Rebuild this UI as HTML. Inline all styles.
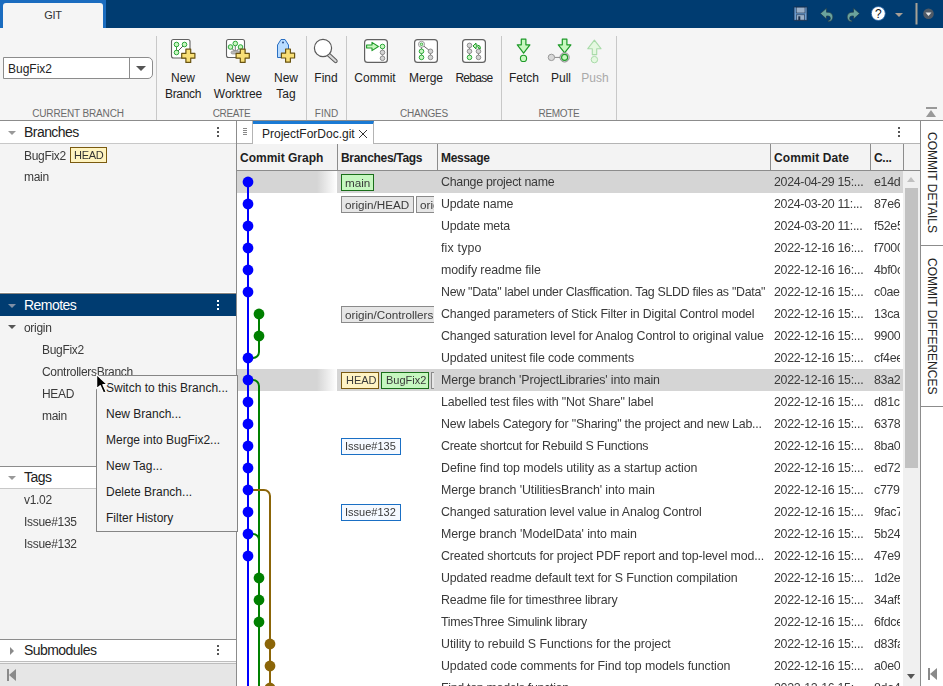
<!DOCTYPE html>
<html><head><meta charset="utf-8">
<style>
*{box-sizing:border-box}
html,body{margin:0;padding:0}
body{width:943px;height:686px;overflow:hidden;position:relative;background:#f5f5f5;font-family:"Liberation Sans",sans-serif;font-size:12px;color:#222}
.a{position:absolute}
.t{position:absolute;white-space:nowrap;line-height:1}
/* top bar */
#top{left:0;top:0;width:943px;height:28px;background:#003c71}
#tabframe{left:0;top:0;width:106px;height:28px;background:#1a6cbf}
#gittab{left:3px;top:3px;width:100px;height:25px;background:#f5f5f5;border-radius:3px 3px 0 0}
/* toolstrip */
#ts{left:0;top:28px;width:943px;height:93px;background:#f5f5f5;border-bottom:1px solid #8c8c8c}
.sep{position:absolute;top:36px;width:1px;height:84px;background:#c8c8c8}
.lbl{position:absolute;top:109px;font-size:10px;color:#6b6b6b;text-align:center;line-height:10px}
.btxt{position:absolute;font-size:12px;color:#222;text-align:center;line-height:16px}
/* left panel */
#left{left:0;top:121px;width:237px;height:565px;background:#f4f4f4;border-right:1px solid #8c8c8c}
.ph{position:absolute;left:0;width:236px;height:22px;background:#fff}
.ph .t{font-size:13px;left:24px;top:6px;color:#222}
.tri{position:absolute;width:0;height:0;border-left:4px solid transparent;border-right:4px solid transparent;border-top:4px solid #999}
.dots{position:absolute;width:2px;}
.dots i{display:block;width:2px;height:2px;background:#555;margin-bottom:2px}
.li{position:absolute;font-size:12px;letter-spacing:-0.3px;color:#3a3a3a;line-height:1;white-space:nowrap;will-change:transform}
.gs{will-change:transform}
.bd{display:inline-block;overflow:hidden;height:17px;border:1px solid #8a8a8a;background:#e6e6e6;padding:0 3px 0 3px;margin-right:2px;font-size:11.7px;line-height:15px;color:#3a3a3a;vertical-align:top}
.bd.g{background:#c6f7c0;border-color:#1a6e1a}
.bd.h{background:#fff3c4;border-color:#7a5a10}
.bd.tg{background:#f5f9ff;border-color:#1a6fc4}
</style></head>
<body>
<div id="top" class="a"></div>
<div id="tabframe" class="a"></div>
<div id="gittab" class="a"></div>
<div class="t" style="left:3px;width:100px;text-align:center;top:10px;font-size:11px;color:#333;letter-spacing:-0.3px">GIT</div>

<div id="ts" class="a"></div>
<div class="sep" style="left:156px"></div>
<div class="sep" style="left:306px"></div>
<div class="sep" style="left:346px"></div>
<div class="sep" style="left:501px"></div>
<div class="sep" style="left:616px"></div>


<!-- toolstrip content -->
<div class="a" style="left:3px;top:57px;width:150px;height:22px;background:#fff;border:1px solid #8c8c8c;border-radius:0 5px 5px 0"></div>
<div class="a" style="left:129px;top:58px;width:1px;height:20px;background:#8c8c8c"></div>
<div class="a" style="left:136px;top:66px;width:0;height:0;border-left:5px solid transparent;border-right:5px solid transparent;border-top:5px solid #555"></div>
<div class="t" style="left:8px;top:63px;font-size:12px;color:#222">BugFix2</div>

<div class="lbl" style="left:0;width:156px;letter-spacing:-0.15px">CURRENT BRANCH</div>
<div class="lbl" style="left:157px;width:149px;letter-spacing:-0.4px">CREATE</div>
<div class="lbl" style="left:307px;width:39px">FIND</div>
<div class="lbl" style="left:347px;width:154px;letter-spacing:-0.2px">CHANGES</div>
<div class="lbl" style="left:502px;width:114px;letter-spacing:-0.3px">REMOTE</div>

<div class="btxt" style="left:153px;top:70px;width:60px">New<br><span style="letter-spacing:-0.35px">Branch</span></div>
<div class="btxt" style="left:208px;top:70px;width:60px">New<br>Worktree</div>
<div class="btxt" style="left:256px;top:70px;width:60px">New<br>Tag</div>
<div class="btxt" style="left:296px;top:70px;width:60px">Find</div>
<div class="btxt" style="left:345px;top:70px;width:60px">Commit</div>
<div class="btxt" style="left:396px;top:70px;width:60px">Merge</div>
<div class="btxt" style="left:444px;top:70px;width:60px;letter-spacing:-0.7px">Rebase</div>
<div class="btxt" style="left:494px;top:70px;width:60px">Fetch</div>
<div class="btxt" style="left:531px;top:70px;width:60px">Pull</div>
<div class="btxt" style="left:565px;top:70px;width:60px;color:#a9a9a9">Push</div>

<svg class="a" style="left:0;top:0" width="943" height="121" viewBox="0 0 943 121">
 <defs>
  <path id="plus" d="M-2.4,-6.6 H2.4 V-2.4 H6.6 V2.4 H2.4 V6.6 H-2.4 V2.4 H-6.6 V-2.4 H-2.4 Z" fill="#f8df76" stroke="#6a5412" stroke-width="1.2" stroke-linejoin="round"/>
  <g id="gdot"><circle r="2.3" fill="#c8f7c0" stroke="#2ba83a" stroke-width="1"/></g>
  <g id="ydot"><circle r="2.3" fill="#d4d4d4" stroke="#8f8f8f" stroke-width="1"/></g>
 </defs>
 <!-- New Branch -->
 <rect x="171.5" y="39.5" width="18.5" height="18.5" rx="2" fill="#fff" stroke="#616161" stroke-width="1.1"/>
 <line x1="176.5" y1="44.5" x2="176.5" y2="52.5" stroke="#3a9a3a" stroke-width="1"/>
 <line x1="176.5" y1="52.5" x2="184.5" y2="44.5" stroke="#555" stroke-width="1"/>
 <use href="#gdot" x="176.5" y="44.5"/><use href="#gdot" x="184.5" y="44.5"/><use href="#gdot" x="176.5" y="52.5"/>
 <use href="#plus" x="188.3" y="55.8"/>
 <!-- New Worktree -->
 <rect x="226.5" y="39.5" width="18" height="18" rx="2" fill="#fff" stroke="#616161" stroke-width="1.1"/>
 <line x1="235.3" y1="44" x2="235.3" y2="52" stroke="#555" stroke-width="0.8"/>
 <line x1="230.5" y1="47" x2="235.5" y2="52" stroke="#555"/><line x1="240.5" y1="47" x2="235.5" y2="52" stroke="#555"/>
 <rect x="231" y="51" width="9" height="3" rx="1.5" fill="#bbb" stroke="#888" stroke-width="0.6"/>
 <use href="#gdot" x="235.3" y="43.5"/><use href="#gdot" x="230.5" y="47"/><use href="#gdot" x="240.5" y="47"/>
 <use href="#plus" x="242.7" y="55.8"/>
 <!-- New Tag -->
 <path d="M277.5,57.5 V45 L281,39.5 h4 L288.5,45 V57.5 z" fill="#b9dcff" stroke="#2a6fc2"/>
 <circle cx="283" cy="42.5" r="1" fill="#2a4f8a"/>
 <use href="#plus" x="288" y="55.6"/>
 <!-- Find -->
 <line x1="328.6" y1="54.6" x2="335.6" y2="61" stroke="#5a5a5a" stroke-width="4.2" stroke-linecap="round"/>
 <line x1="328.6" y1="54.6" x2="335.6" y2="61" stroke="#d8d8d8" stroke-width="2.2" stroke-linecap="round"/>
 <circle cx="323" cy="48" r="8.6" fill="#fff" stroke="#5a5a5a" stroke-width="1.2"/>
 <!-- Commit -->
 <rect x="364.6" y="39.6" width="22.8" height="22.8" rx="3" fill="#fff" stroke="#616161" stroke-width="1.2"/>
 <path d="M366.6,45 h5.4 v-2.6 l6.4,4.1 -6.4,4.1 v-2.6 h-5.4z" fill="#c8f8c0" stroke="#1e9a28" stroke-width="1.1" stroke-linejoin="round"/>
 <line x1="382.5" y1="46.5" x2="382.5" y2="58.3" stroke="#8a8a8a" stroke-width="0.8"/>
 <use href="#gdot" x="382.5" y="46.5"/><use href="#ydot" x="382.5" y="52.4"/><use href="#ydot" x="382.5" y="58.3"/>
 <!-- Merge -->
 <rect x="414.6" y="39.6" width="22.8" height="22.8" rx="3" fill="#fff" stroke="#616161" stroke-width="1.2"/>
 <line x1="421.5" y1="44.3" x2="421.5" y2="57.4" stroke="#555" stroke-width="0.8"/>
 <line x1="421.5" y1="44.3" x2="430.5" y2="51.3" stroke="#555" stroke-width="0.9"/>
 <line x1="430.5" y1="51.3" x2="430.5" y2="57.4" stroke="#555" stroke-width="0.8"/>
 <circle cx="421.5" cy="44.3" r="3" fill="#fff" stroke="#8a8a8a" stroke-width="0.9"/><circle cx="421.5" cy="44.3" r="1.3" fill="#c8f8c0" stroke="#1e9a28" stroke-width="0.8"/>
 <use href="#gdot" x="421.5" y="51.3"/><use href="#gdot" x="421.5" y="57.4"/>
 <use href="#ydot" x="430.5" y="51.3"/><use href="#ydot" x="430.5" y="57.4"/>
 <!-- Rebase -->
 <rect x="462.6" y="39.6" width="22.8" height="22.8" rx="3" fill="#fff" stroke="#616161" stroke-width="1.2"/>
 <line x1="469.5" y1="45.4" x2="469.5" y2="57.4" stroke="#555" stroke-width="0.8"/>
 <use href="#ydot" x="469.5" y="45.4"/><use href="#ydot" x="469.5" y="51.3"/><use href="#gdot" x="469.5" y="57.4"/>
 <line x1="478.5" y1="51.3" x2="478.5" y2="57.4" stroke="#555" stroke-width="0.8"/>
 <use href="#ydot" x="478.5" y="51.3"/><use href="#ydot" x="478.5" y="57.4"/>
 <path d="M480.4,48.6 v-0.6 a2.8,2.8 0 0 0 -2.8,-2.8 h-1.6 v-2.1 l-3,2.9 3,2.9 v-2.1 h1.6 a1.1,1.1 0 0 1 1.1,1.1 v0.7z" fill="#c8f8c0" stroke="#1e9a28" stroke-width="1" stroke-linejoin="round"/>
 <!-- Fetch -->
 <path d="M521.3,39.2 h4.6 v5.6 h4 l-6.3,8.4 -6.3,-8.4 h4z" fill="#c8f8c0" stroke="#1e9a28" stroke-width="1.2" stroke-linejoin="round"/>
 <circle cx="523.5" cy="58.4" r="3.1" fill="#c8f8c0" stroke="#1e9a28" stroke-width="1.1"/>
 <!-- Pull -->
 <path d="M562.3,39.2 h4.6 v5.6 h4 l-6.3,8.1 -6.3,-8.1 h4z" fill="#c8f8c0" stroke="#1e9a28" stroke-width="1.2" stroke-linejoin="round"/>
 <line x1="551.4" y1="57.4" x2="560" y2="57.4" stroke="#8a8a8a" stroke-width="1"/>
 <circle cx="551.4" cy="57.4" r="3.2" fill="#d8d8d8" stroke="#9a9a9a" stroke-width="1"/>
 <circle cx="564.6" cy="57.4" r="4.6" fill="#e6e6e6" stroke="#8a8a8a" stroke-width="1"/>
 <circle cx="564.6" cy="57.4" r="3" fill="#c8f8c0" stroke="#1e9a28" stroke-width="1.1"/>
 <!-- Push -->
 <path d="M592.3,54.6 h4.4 v-5.9 h4.3 l-6.6,-8.6 -6.6,8.6 h4.5z" fill="#e4f8e0" stroke="#a9dba9" stroke-width="1.1" stroke-linejoin="round"/>
 <circle cx="594.4" cy="59.6" r="3.2" fill="#e4f8e0" stroke="#a9dba9" stroke-width="1"/>
 <!-- top right icons -->
</svg>

<div id="left" class="a"></div>

<!-- left panel content -->
<div class="ph" style="top:121px"></div>
<div class="a" style="left:0;top:143px;width:236px;height:1px;background:#c8c8c8"></div>
<div class="tri" style="left:8px;top:131px"></div>
<div class="t" style="left:24px;top:125px;font-size:14px;letter-spacing:-0.55px;color:#222">Branches</div>
<div class="dots" style="left:217px;top:127px"><i></i><i></i><i></i></div>
<div class="li" style="left:24px;top:150px">BugFix2</div>
<div class="a" style="left:70px;top:147px;width:37px;height:16px;background:#fff4c0;border:1px solid #7a5a10"></div>
<div class="li" style="left:74px;top:150px;color:#333;font-size:11px">HEAD</div>
<div class="li" style="left:24px;top:171px">main</div>

<div class="a" style="left:0;top:292px;width:236px;height:1px;background:#fff"></div>
<div class="a" style="left:0;top:293px;width:236px;height:1px;background:#8a8580"></div>
<div class="a" style="left:0;top:294px;width:236px;height:22px;background:#003c71"></div>
<div class="tri" style="left:8px;top:304px;border-top-color:#7f8fa5"></div>
<div class="t" style="left:24px;top:298px;font-size:14px;letter-spacing:-0.55px;color:#fff">Remotes</div>
<div class="dots" style="left:217px;top:300px"><i style="background:#fff"></i><i style="background:#fff"></i><i style="background:#fff"></i></div>
<div class="tri" style="left:8px;top:325px;border-top-color:#555"></div>
<div class="li" style="left:24px;top:322px">origin</div>
<div class="li" style="left:42px;top:344px">BugFix2</div>
<div class="li" style="left:42px;top:366px">ControllersBranch</div>
<div class="li" style="left:42px;top:388px">HEAD</div>
<div class="li" style="left:42px;top:410px">main</div>

<div class="a" style="left:0;top:466px;width:236px;height:1px;background:#8c8c8c"></div>
<div class="ph" style="top:467px"></div>
<div class="a" style="left:0;top:488px;width:236px;height:1px;background:#c8c8c8"></div>
<div class="tri" style="left:8px;top:476px"></div>
<div class="t" style="left:24px;top:470px;font-size:14px;letter-spacing:-0.55px;color:#222">Tags</div>
<div class="li" style="left:24px;top:494px">v1.02</div>
<div class="li" style="left:24px;top:516px">Issue#135</div>
<div class="li" style="left:24px;top:538px">Issue#132</div>

<div class="a" style="left:0;top:639px;width:236px;height:1px;background:#8c8c8c"></div>
<div class="ph" style="top:640px;height:21px"></div>
<div class="a" style="left:0;top:661px;width:236px;height:1px;background:#bdbdbd"></div>
<div class="a" style="left:0;top:662px;width:236px;height:1px;background:#f5f5f5"></div>
<div class="a" style="left:0;top:663px;width:236px;height:1px;background:#bdbdbd"></div>
<div class="a" style="left:10px;top:647px;width:0;height:0;border-top:4px solid transparent;border-bottom:4px solid transparent;border-left:4px solid #8a8a8a"></div>
<div class="t" style="left:24px;top:643px;font-size:14px;letter-spacing:-0.55px;color:#222">Submodules</div>
<div class="dots" style="left:217px;top:645px"><i></i><i></i><i></i></div>
<div class="a" style="left:0;top:664px;width:236px;height:22px;background:#e6e6e6"></div>
<div class="a" style="left:7px;top:669px;width:2px;height:12px;background:#8a8a8a"></div>
<div class="a" style="left:9px;top:669px;width:0;height:0;border-top:6px solid transparent;border-bottom:6px solid transparent;border-right:7.5px solid #8a8a8a"></div>

<!-- main table -->
<div class="a" style="left:237px;top:121px;width:683px;height:22px;background:#fff"></div>
<div class="a" style="left:237px;top:121px;width:16px;height:23px;background:#fff;border-right:1px solid #b4b4b4;border-bottom:1px solid #b4b4b4"></div>
<div class="a" style="left:243px;top:128px;width:4px;height:1px;background:#888;box-shadow:0 2px 0 #888,0 4px 0 #888,0 6px 0 #888"></div>
<div class="a" style="left:373px;top:143px;width:547px;height:1px;background:#b4b4b4"></div>
<div class="a" style="left:253px;top:121px;width:121px;height:23px;background:#fff;border-right:1px solid #b4b4b4;border-top:3px solid #1a7ad4"></div>
<div class="t" style="left:262px;top:128px;font-size:12px;color:#222">ProjectForDoc.git</div>
<svg class="a" style="left:358px;top:129px" width="10" height="10"><path d="M1,1 L9,9 M9,1 L1,9" stroke="#333" stroke-width="1"/></svg>
<div class="dots" style="left:898px;top:127px"><i></i><i></i><i></i></div>
<div class="a" style="left:237px;top:144px;width:683px;height:27px;background:#f3f3f3;border-bottom:1px solid #8c8c8c"></div>
<div class="a" style="left:337px;top:144px;width:1px;height:26px;background:#8c8c8c"></div>
<div class="a" style="left:437px;top:144px;width:1px;height:26px;background:#8c8c8c"></div>
<div class="a" style="left:770px;top:144px;width:1px;height:26px;background:#8c8c8c"></div>
<div class="a" style="left:870px;top:144px;width:1px;height:26px;background:#8c8c8c"></div>
<div class="a" style="left:903px;top:144px;width:1px;height:26px;background:#8c8c8c"></div>
<div class="t" style="left:240px;top:152px;font-weight:bold;font-size:12px;color:#1e1e1e;letter-spacing:0px">Commit Graph</div>
<div class="t" style="left:341px;top:152px;font-weight:bold;font-size:12px;color:#1e1e1e;letter-spacing:-0.3px">Branches/Tags</div>
<div class="t" style="left:441px;top:152px;font-weight:bold;font-size:12px;color:#1e1e1e;letter-spacing:-0.3px">Message</div>
<div class="t" style="left:774px;top:152px;font-weight:bold;font-size:12px;color:#1e1e1e;letter-spacing:0.1px">Commit Date</div>
<div class="t" style="left:874px;top:152px;font-weight:bold;font-size:12px;color:#1e1e1e;letter-spacing:-0.3px">C...</div>
<div class="a gs" style="left:237px;top:171px;width:668px;height:515px;background:#fff;overflow:hidden">
<div class="a" style="left:0;top:0px;width:666px;height:22px;background:#d5d5d5"></div>
<div class="a" style="left:80px;top:0px;width:20px;height:22px;background:linear-gradient(to right,#d5d5d5,#fff)"></div>
<div class="t" style="left:204px;top:5px;width:328px;overflow:hidden;padding-bottom:4px;font-size:12.4px;letter-spacing:-0.267px;color:#3a3a3a">Change project name</div>
<div class="t" style="left:537px;top:5px;font-size:12.4px;letter-spacing:-0.3px;color:#3a3a3a">2024-04-29 15:...</div>
<div class="t" style="left:637px;top:5px;width:26px;overflow:hidden;padding-bottom:4px;font-size:12.4px;letter-spacing:-0.3px;color:#3a3a3a">e14d0</div>
<div class="a" style="left:104px;top:3px;width:93px;height:18px;overflow:hidden;white-space:nowrap"><span class="bd g" style="width:33px">main</span>
</div>
<div class="t" style="left:204px;top:27px;width:328px;overflow:hidden;padding-bottom:4px;font-size:12.4px;letter-spacing:-0.200px;color:#3a3a3a">Update name</div>
<div class="t" style="left:537px;top:27px;font-size:12.4px;letter-spacing:-0.3px;color:#3a3a3a">2024-03-20 11:...</div>
<div class="t" style="left:637px;top:27px;width:26px;overflow:hidden;padding-bottom:4px;font-size:12.4px;letter-spacing:-0.3px;color:#3a3a3a">87e6a</div>
<div class="a" style="left:104px;top:25px;width:93px;height:18px;overflow:hidden;white-space:nowrap"><span class="bd x" style="width:73px">origin/HEAD</span><span class="bd x">origin/main</span>
</div>
<div class="t" style="left:204px;top:49px;width:328px;overflow:hidden;padding-bottom:4px;font-size:12.4px;letter-spacing:-0.180px;color:#3a3a3a">Update meta</div>
<div class="t" style="left:537px;top:49px;font-size:12.4px;letter-spacing:-0.3px;color:#3a3a3a">2024-03-20 11:...</div>
<div class="t" style="left:637px;top:49px;width:26px;overflow:hidden;padding-bottom:4px;font-size:12.4px;letter-spacing:-0.3px;color:#3a3a3a">f52e5</div>
<div class="t" style="left:204px;top:71px;width:328px;overflow:hidden;padding-bottom:4px;font-size:12.4px;letter-spacing:0.171px;color:#3a3a3a">fix typo</div>
<div class="t" style="left:537px;top:71px;font-size:12.4px;letter-spacing:-0.3px;color:#3a3a3a">2022-12-16 16:...</div>
<div class="t" style="left:637px;top:71px;width:26px;overflow:hidden;padding-bottom:4px;font-size:12.4px;letter-spacing:-0.3px;color:#3a3a3a">f7000</div>
<div class="t" style="left:204px;top:93px;width:328px;overflow:hidden;padding-bottom:4px;font-size:12.4px;letter-spacing:-0.082px;color:#3a3a3a">modify readme file</div>
<div class="t" style="left:537px;top:93px;font-size:12.4px;letter-spacing:-0.3px;color:#3a3a3a">2022-12-16 16:...</div>
<div class="t" style="left:637px;top:93px;width:26px;overflow:hidden;padding-bottom:4px;font-size:12.4px;letter-spacing:-0.3px;color:#3a3a3a">4bf0c</div>
<div class="t" style="left:204px;top:115px;width:328px;overflow:hidden;padding-bottom:4px;font-size:12.4px;letter-spacing:-0.292px;color:#3a3a3a">New "Data" label under Clasffication. Tag SLDD files as "Data"</div>
<div class="t" style="left:537px;top:115px;font-size:12.4px;letter-spacing:-0.3px;color:#3a3a3a">2022-12-16 15:...</div>
<div class="t" style="left:637px;top:115px;width:26px;overflow:hidden;padding-bottom:4px;font-size:12.4px;letter-spacing:-0.3px;color:#3a3a3a">c0ae9</div>
<div class="t" style="left:204px;top:137px;width:328px;overflow:hidden;padding-bottom:4px;font-size:12.4px;letter-spacing:-0.162px;color:#3a3a3a">Changed parameters of Stick Filter in Digital Control model</div>
<div class="t" style="left:537px;top:137px;font-size:12.4px;letter-spacing:-0.3px;color:#3a3a3a">2022-12-16 15:...</div>
<div class="t" style="left:637px;top:137px;width:26px;overflow:hidden;padding-bottom:4px;font-size:12.4px;letter-spacing:-0.3px;color:#3a3a3a">13ca0</div>
<div class="a" style="left:104px;top:135px;width:93px;height:18px;overflow:hidden;white-space:nowrap"><span class="bd x">origin/ControllersBranch</span>
</div>
<div class="t" style="left:204px;top:159px;width:328px;overflow:hidden;padding-bottom:4px;font-size:12.4px;letter-spacing:-0.117px;color:#3a3a3a">Changed saturation level for Analog Control to original value</div>
<div class="t" style="left:537px;top:159px;font-size:12.4px;letter-spacing:-0.3px;color:#3a3a3a">2022-12-16 15:...</div>
<div class="t" style="left:637px;top:159px;width:26px;overflow:hidden;padding-bottom:4px;font-size:12.4px;letter-spacing:-0.3px;color:#3a3a3a">99004</div>
<div class="t" style="left:204px;top:181px;width:328px;overflow:hidden;padding-bottom:4px;font-size:12.4px;letter-spacing:-0.118px;color:#3a3a3a">Updated unitest file code comments</div>
<div class="t" style="left:537px;top:181px;font-size:12.4px;letter-spacing:-0.3px;color:#3a3a3a">2022-12-16 15:...</div>
<div class="t" style="left:637px;top:181px;width:26px;overflow:hidden;padding-bottom:4px;font-size:12.4px;letter-spacing:-0.3px;color:#3a3a3a">cf4ee</div>
<div class="a" style="left:0;top:198px;width:666px;height:22px;background:#d5d5d5"></div>
<div class="a" style="left:80px;top:198px;width:20px;height:22px;background:linear-gradient(to right,#d5d5d5,#fff)"></div>
<div class="t" style="left:204px;top:203px;width:328px;overflow:hidden;padding-bottom:4px;font-size:12.4px;letter-spacing:-0.137px;color:#3a3a3a">Merge branch 'ProjectLibraries' into main</div>
<div class="t" style="left:537px;top:203px;font-size:12.4px;letter-spacing:-0.3px;color:#3a3a3a">2022-12-16 15:...</div>
<div class="t" style="left:637px;top:203px;width:26px;overflow:hidden;padding-bottom:4px;font-size:12.4px;letter-spacing:-0.3px;color:#3a3a3a">83a2e</div>
<div class="a" style="left:104px;top:201px;width:93px;height:18px;overflow:hidden;white-space:nowrap"><span class="bd h" style="width:38px;font-size:11px;padding-left:4px">HEAD</span><span class="bd g" style="width:48px;font-size:11px;padding-left:4px">BugFix2</span><span class="bd x">origin/BugFix2</span>
</div>
<div class="t" style="left:204px;top:225px;width:328px;overflow:hidden;padding-bottom:4px;font-size:12.4px;letter-spacing:-0.154px;color:#3a3a3a">Labelled test files with "Not Share" label</div>
<div class="t" style="left:537px;top:225px;font-size:12.4px;letter-spacing:-0.3px;color:#3a3a3a">2022-12-16 15:...</div>
<div class="t" style="left:637px;top:225px;width:26px;overflow:hidden;padding-bottom:4px;font-size:12.4px;letter-spacing:-0.3px;color:#3a3a3a">d81c3</div>
<div class="t" style="left:204px;top:247px;width:328px;overflow:hidden;padding-bottom:4px;font-size:12.4px;letter-spacing:-0.207px;color:#3a3a3a">New labels Category for "Sharing" the project and new Lab...</div>
<div class="t" style="left:537px;top:247px;font-size:12.4px;letter-spacing:-0.3px;color:#3a3a3a">2022-12-16 15:...</div>
<div class="t" style="left:637px;top:247px;width:26px;overflow:hidden;padding-bottom:4px;font-size:12.4px;letter-spacing:-0.3px;color:#3a3a3a">63781</div>
<div class="t" style="left:204px;top:269px;width:328px;overflow:hidden;padding-bottom:4px;font-size:12.4px;letter-spacing:-0.247px;color:#3a3a3a">Create shortcut for Rebuild S Functions</div>
<div class="t" style="left:537px;top:269px;font-size:12.4px;letter-spacing:-0.3px;color:#3a3a3a">2022-12-16 15:...</div>
<div class="t" style="left:637px;top:269px;width:26px;overflow:hidden;padding-bottom:4px;font-size:12.4px;letter-spacing:-0.3px;color:#3a3a3a">8ba01</div>
<div class="a" style="left:104px;top:267px;width:93px;height:18px;overflow:hidden;white-space:nowrap"><span class="bd tg" style="width:60px;font-size:11px;padding-left:3px">Issue#135</span>
</div>
<div class="t" style="left:204px;top:291px;width:328px;overflow:hidden;padding-bottom:4px;font-size:12.4px;letter-spacing:-0.065px;color:#3a3a3a">Define find top models utility as a startup action</div>
<div class="t" style="left:537px;top:291px;font-size:12.4px;letter-spacing:-0.3px;color:#3a3a3a">2022-12-16 15:...</div>
<div class="t" style="left:637px;top:291px;width:26px;overflow:hidden;padding-bottom:4px;font-size:12.4px;letter-spacing:-0.3px;color:#3a3a3a">ed722</div>
<div class="t" style="left:204px;top:313px;width:328px;overflow:hidden;padding-bottom:4px;font-size:12.4px;letter-spacing:-0.095px;color:#3a3a3a">Merge branch 'UtilitiesBranch' into main</div>
<div class="t" style="left:537px;top:313px;font-size:12.4px;letter-spacing:-0.3px;color:#3a3a3a">2022-12-16 15:...</div>
<div class="t" style="left:637px;top:313px;width:26px;overflow:hidden;padding-bottom:4px;font-size:12.4px;letter-spacing:-0.3px;color:#3a3a3a">c779b</div>
<div class="t" style="left:204px;top:335px;width:328px;overflow:hidden;padding-bottom:4px;font-size:12.4px;letter-spacing:-0.151px;color:#3a3a3a">Changed saturation level value in Analog Control</div>
<div class="t" style="left:537px;top:335px;font-size:12.4px;letter-spacing:-0.3px;color:#3a3a3a">2022-12-16 15:...</div>
<div class="t" style="left:637px;top:335px;width:26px;overflow:hidden;padding-bottom:4px;font-size:12.4px;letter-spacing:-0.3px;color:#3a3a3a">9fac7</div>
<div class="a" style="left:104px;top:333px;width:93px;height:18px;overflow:hidden;white-space:nowrap"><span class="bd tg" style="width:60px;font-size:11px;padding-left:3px">Issue#132</span>
</div>
<div class="t" style="left:204px;top:357px;width:328px;overflow:hidden;padding-bottom:4px;font-size:12.4px;letter-spacing:-0.073px;color:#3a3a3a">Merge branch 'ModelData' into main</div>
<div class="t" style="left:537px;top:357px;font-size:12.4px;letter-spacing:-0.3px;color:#3a3a3a">2022-12-16 15:...</div>
<div class="t" style="left:637px;top:357px;width:26px;overflow:hidden;padding-bottom:4px;font-size:12.4px;letter-spacing:-0.3px;color:#3a3a3a">5b241</div>
<div class="t" style="left:204px;top:379px;width:328px;overflow:hidden;padding-bottom:4px;font-size:12.4px;letter-spacing:-0.158px;color:#3a3a3a">Created shortcuts for project PDF report and top-level mod...</div>
<div class="t" style="left:537px;top:379px;font-size:12.4px;letter-spacing:-0.3px;color:#3a3a3a">2022-12-16 15:...</div>
<div class="t" style="left:637px;top:379px;width:26px;overflow:hidden;padding-bottom:4px;font-size:12.4px;letter-spacing:-0.3px;color:#3a3a3a">47e91</div>
<div class="t" style="left:204px;top:401px;width:328px;overflow:hidden;padding-bottom:4px;font-size:12.4px;letter-spacing:-0.121px;color:#3a3a3a">Updated readme default text for S Function compilation</div>
<div class="t" style="left:537px;top:401px;font-size:12.4px;letter-spacing:-0.3px;color:#3a3a3a">2022-12-16 15:...</div>
<div class="t" style="left:637px;top:401px;width:26px;overflow:hidden;padding-bottom:4px;font-size:12.4px;letter-spacing:-0.3px;color:#3a3a3a">1d2e0</div>
<div class="t" style="left:204px;top:423px;width:328px;overflow:hidden;padding-bottom:4px;font-size:12.4px;letter-spacing:-0.179px;color:#3a3a3a">Readme file for timesthree library</div>
<div class="t" style="left:537px;top:423px;font-size:12.4px;letter-spacing:-0.3px;color:#3a3a3a">2022-12-16 15:...</div>
<div class="t" style="left:637px;top:423px;width:26px;overflow:hidden;padding-bottom:4px;font-size:12.4px;letter-spacing:-0.3px;color:#3a3a3a">34af5</div>
<div class="t" style="left:204px;top:445px;width:328px;overflow:hidden;padding-bottom:4px;font-size:12.4px;letter-spacing:-0.262px;color:#3a3a3a">TimesThree Simulink library</div>
<div class="t" style="left:537px;top:445px;font-size:12.4px;letter-spacing:-0.3px;color:#3a3a3a">2022-12-16 15:...</div>
<div class="t" style="left:637px;top:445px;width:26px;overflow:hidden;padding-bottom:4px;font-size:12.4px;letter-spacing:-0.3px;color:#3a3a3a">6fdce</div>
<div class="t" style="left:204px;top:467px;width:328px;overflow:hidden;padding-bottom:4px;font-size:12.4px;letter-spacing:-0.067px;color:#3a3a3a">Utility to rebuild S Functions for the project</div>
<div class="t" style="left:537px;top:467px;font-size:12.4px;letter-spacing:-0.3px;color:#3a3a3a">2022-12-16 15:...</div>
<div class="t" style="left:637px;top:467px;width:26px;overflow:hidden;padding-bottom:4px;font-size:12.4px;letter-spacing:-0.3px;color:#3a3a3a">d83fa</div>
<div class="t" style="left:204px;top:489px;width:328px;overflow:hidden;padding-bottom:4px;font-size:12.4px;letter-spacing:-0.096px;color:#3a3a3a">Updated code comments for Find top models function</div>
<div class="t" style="left:537px;top:489px;font-size:12.4px;letter-spacing:-0.3px;color:#3a3a3a">2022-12-16 15:...</div>
<div class="t" style="left:637px;top:489px;width:26px;overflow:hidden;padding-bottom:4px;font-size:12.4px;letter-spacing:-0.3px;color:#3a3a3a">a0e09</div>
<div class="t" style="left:204px;top:511px;width:328px;overflow:hidden;padding-bottom:4px;font-size:12.4px;letter-spacing:-0.3px;color:#3a3a3a">Find top models function</div>
<div class="t" style="left:537px;top:511px;font-size:12.4px;letter-spacing:-0.3px;color:#3a3a3a">2022-12-16 15:...</div>
<div class="t" style="left:637px;top:511px;width:26px;overflow:hidden;padding-bottom:4px;font-size:12.4px;letter-spacing:-0.3px;color:#3a3a3a">8da4f</div>
<svg class="a" style="left:0;top:0" width="100" height="515" id="graph"><line x1="11" y1="11" x2="11" y2="515" stroke="#0000ff" stroke-width="2"/><path d="M22,143 V181 A6,6 0 0 1 16,187 H11" fill="none" stroke="#008000" stroke-width="2"/><path d="M11,209 H16 A6,6 0 0 1 22,215 V515" fill="none" stroke="#008000" stroke-width="2"/><path d="M11,363 H16 A6,6 0 0 1 22,369" fill="none" stroke="#008000" stroke-width="2"/><path d="M11,319 H27 A6,6 0 0 1 33,325 V515" fill="none" stroke="#8b6508" stroke-width="2"/><circle cx="11" cy="11" r="5.4" fill="#0000ff"/><circle cx="11" cy="33" r="5.4" fill="#0000ff"/><circle cx="11" cy="55" r="5.4" fill="#0000ff"/><circle cx="11" cy="77" r="5.4" fill="#0000ff"/><circle cx="11" cy="99" r="5.4" fill="#0000ff"/><circle cx="11" cy="121" r="5.4" fill="#0000ff"/><circle cx="22" cy="143" r="5.4" fill="#008000"/><circle cx="22" cy="165" r="5.4" fill="#008000"/><circle cx="11" cy="187" r="5.4" fill="#0000ff"/><circle cx="11" cy="209" r="5.4" fill="#0000ff"/><circle cx="11" cy="231" r="5.4" fill="#0000ff"/><circle cx="11" cy="253" r="5.4" fill="#0000ff"/><circle cx="11" cy="275" r="5.4" fill="#0000ff"/><circle cx="11" cy="297" r="5.4" fill="#0000ff"/><circle cx="11" cy="319" r="5.4" fill="#0000ff"/><circle cx="11" cy="341" r="5.4" fill="#0000ff"/><circle cx="11" cy="363" r="5.4" fill="#0000ff"/><circle cx="11" cy="385" r="5.4" fill="#0000ff"/><circle cx="22" cy="407" r="5.4" fill="#008000"/><circle cx="22" cy="429" r="5.4" fill="#008000"/><circle cx="22" cy="451" r="5.4" fill="#008000"/><circle cx="33" cy="473" r="5.4" fill="#8b6508"/><circle cx="33" cy="495" r="5.4" fill="#8b6508"/><circle cx="33" cy="517" r="5.4" fill="#8b6508"/></svg>
</div>
<div class="a" style="left:903px;top:171px;width:17px;height:515px;background:#f0f0f0"></div>
<div class="a" style="left:905px;top:188px;width:13px;height:280px;background:#c2c2c2"></div>
<div class="a" style="left:907px;top:177px;width:0;height:0;border-left:4.5px solid transparent;border-right:4.5px solid transparent;border-bottom:5px solid #c0c0c0"></div>
<div class="a" style="left:907px;top:674px;width:0;height:0;border-left:4.5px solid transparent;border-right:4.5px solid transparent;border-top:5px solid #555"></div>
<div class="a" style="left:920px;top:121px;width:23px;height:565px;background:#fff;border-left:1px solid #8c8c8c"></div>
<div class="a" style="left:921px;top:245px;width:22px;height:1px;background:#8c8c8c"></div>
<div class="a" style="left:921px;top:406px;width:22px;height:1px;background:#8c8c8c"></div>
<div class="t" style="left:926px;top:132px;writing-mode:vertical-rl;font-size:12px;color:#222">COMMIT DETAILS</div>
<div class="t" style="left:926px;top:258px;writing-mode:vertical-rl;font-size:12px;color:#222">COMMIT DIFFERENCES</div>
<div class="a" style="left:926px;top:107px;width:11px;height:1.5px;background:#999"></div>
<div class="a" style="left:926px;top:110px;width:0;height:0;border-left:5.5px solid transparent;border-right:5.5px solid transparent;border-bottom:7px solid #999"></div>
<div class="a" style="left:928px;top:668px;width:2px;height:12px;background:#8a8a8a"></div>
<div class="a" style="left:930px;top:668px;width:0;height:0;border-top:6px solid transparent;border-bottom:6px solid transparent;border-right:7px solid #8a8a8a"></div>


<!-- top right icons -->
<svg class="a" style="left:780px;top:0" width="163" height="28" viewBox="780 0 163 28">
 <rect x="794" y="7" width="13" height="13.3" fill="#6d9fd2" stroke="#1b2f4a" stroke-width="0.8"/>
 <rect x="796.2" y="7.2" width="8.8" height="5.8" fill="#9ab0c8" stroke="#1b2f4a" stroke-width="0.6"/>
 <rect x="796.5" y="14.8" width="8.2" height="5.3" fill="#9ab0c8" stroke="#1b2f4a" stroke-width="0.6"/>
 <rect x="798.3" y="16.3" width="2" height="4" fill="#1b2f4a"/>
 <path d="M826.5,8.2 L820.4,13.6 L826.5,19 V16 h1.6 a2.3,2.3 0 0 1 0,4.6 v1.2 a3.6,3.6 0 0 0 0,-9.6 h-1.6z" fill="#6aa39c" stroke="#1f3a4a" stroke-width="0.7" stroke-linejoin="round"/>
 <path d="M853.5,8.2 L859.6,13.6 L853.5,19 V16 h-1.6 a2.3,2.3 0 0 0 0,4.6 v1.2 a3.6,3.6 0 0 1 0,-9.6 h1.6z" fill="#6aa39c" stroke="#1f3a4a" stroke-width="0.7" stroke-linejoin="round"/>
 <circle cx="878.3" cy="13.5" r="7" fill="#fff" stroke="#1a5aa0" stroke-width="0.8"/>
 <text x="878.3" y="17.8" font-family="Liberation Sans" font-size="12" text-anchor="middle" fill="#111">?</text>
 <path d="M895,13 h8 l-4,4z" fill="#a89e94"/>
 <rect x="915.5" y="3" width="2" height="21.5" fill="#a8a296"/>
 <circle cx="928.5" cy="13.8" r="5.3" fill="#505a66"/>
 <path d="M925.5,12.5 h6 l-3,3.5z" fill="#e8e8e8"/>
</svg>
<!-- context menu -->
<div class="a" style="left:96px;top:375px;width:142px;height:157px;background:#f4f4f4;border:1px solid #858585"></div>
<div class="t" style="left:106px;top:382px;font-size:12px;color:#222">Switch to this Branch...</div>
<div class="t" style="left:106px;top:408px;font-size:12px;color:#222">New Branch...</div>
<div class="t" style="left:106px;top:434px;font-size:12px;color:#222">Merge into BugFix2...</div>
<div class="t" style="left:106px;top:460px;font-size:12px;color:#222">New Tag...</div>
<div class="t" style="left:106px;top:486px;font-size:12px;color:#222">Delete Branch...</div>
<div class="t" style="left:106px;top:512px;font-size:12px;color:#222">Filter History</div>
<svg class="a" style="left:94px;top:372px" width="19" height="26" viewBox="-2.2 -2.2 16 22">
 <path d="M0,0 V12 L3,9.3 L5.8,15.5 L8,14.5 L5.3,8.5 H9 Z" fill="#000" stroke="#fff" stroke-width="1" stroke-linejoin="round"/>
</svg>

</body></html>
